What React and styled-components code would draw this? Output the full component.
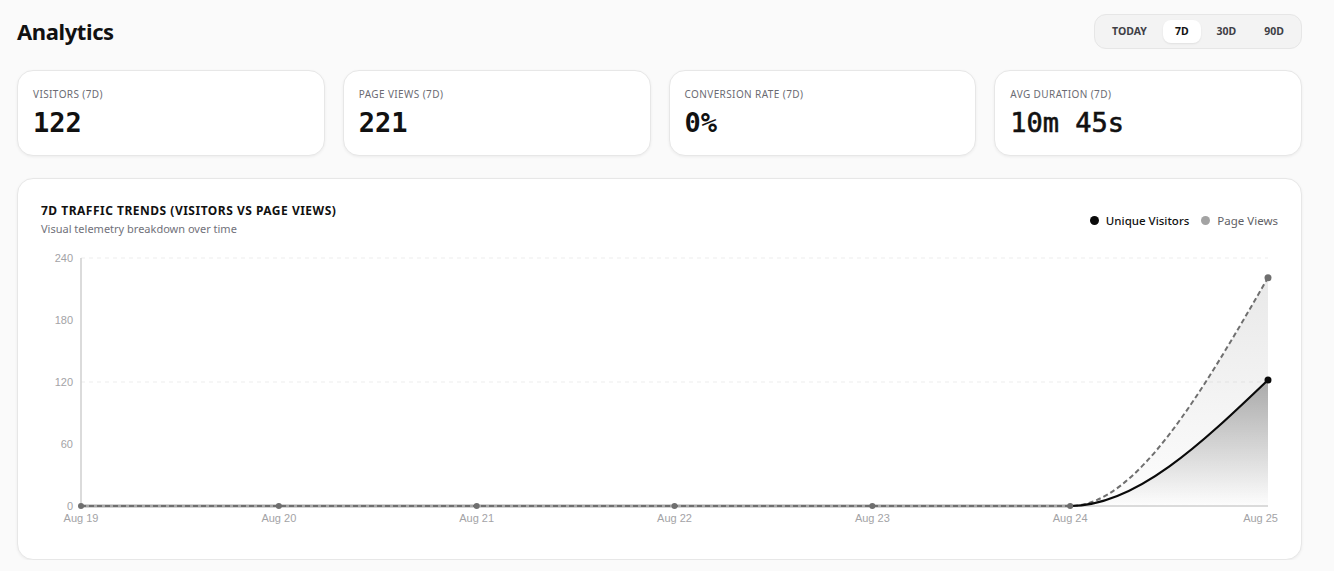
import React from "react";
import styled, { createGlobalStyle } from "styled-components";

const GlobalStyle = createGlobalStyle`
  html, body {
    margin: 0;
    padding: 0;
    background: #fafafa;
    font-family: "Noto Sans", "Open Sans", sans-serif;
    color: #111;
  }
`;

const stats = [
  { label: "Visitors (7D)", value: "122" },
  { label: "Page Views (7D)", value: "221" },
  { label: "Conversion Rate (7D)", value: "0%" },
  { label: "Avg Duration (7D)", value: "10m 45s", medium: true },
];

const days = ["Aug 19", "Aug 20", "Aug 21", "Aug 22", "Aug 23", "Aug 24", "Aug 25"];
const visitors = [0, 0, 0, 0, 0, 0, 122];
const pageViews = [0, 0, 0, 0, 0, 0, 221];

// chart geometry (svg local coords)
const W = 1237;
const H = 287;
const X0 = 40;
const X1 = 1227;
const Y0 = 258;
const Y1 = 10;
const MAX = 240;

const px = (i) => X0 + (i * (X1 - X0)) / (days.length - 1);
const py = (v) => Y0 - (v * (Y0 - Y1)) / MAX;

const sign = (x) => (x < 0 ? -1 : 1);

// monotone-x cubic segments, same idea as d3's curveMonotoneX
const segments = (pts) => {
  const n = pts.length;
  const s = [];
  for (let i = 0; i < n - 1; i++) {
    s.push((pts[i + 1][1] - pts[i][1]) / (pts[i + 1][0] - pts[i][0]));
  }
  const t = new Array(n).fill(0);
  for (let i = 1; i < n - 1; i++) {
    const h0 = pts[i][0] - pts[i - 1][0];
    const h1 = pts[i + 1][0] - pts[i][0];
    const p = (s[i - 1] * h1 + s[i] * h0) / (h0 + h1);
    t[i] =
      (sign(s[i - 1]) + sign(s[i])) *
        Math.min(Math.abs(s[i - 1]), Math.abs(s[i]), 0.5 * Math.abs(p)) || 0;
  }
  t[0] = (3 * s[0] - t[1]) / 2;
  t[n - 1] = (3 * s[n - 2] - t[n - 2]) / 2;
  const out = [];
  for (let i = 0; i < n - 1; i++) {
    const dx = (pts[i + 1][0] - pts[i][0]) / 3;
    out.push(
      `C${pts[i][0] + dx},${pts[i][1] + dx * t[i]} ${pts[i + 1][0] - dx},${
        pts[i + 1][1] - dx * t[i + 1]
      } ${pts[i + 1][0]},${pts[i + 1][1]}`
    );
  }
  return out;
};

const toPts = (arr) => arr.map((v, i) => [px(i), py(v)]);
const line = (arr, from = 0) => {
  const pts = toPts(arr);
  return `M${pts[from][0]},${pts[from][1]}` + segments(pts).slice(from).join("");
};
const area = (arr) => `${line(arr)}L${px(arr.length - 1)},${Y0}L${px(0)},${Y0}Z`;

const Page = styled.div`
  padding: 14px 32px 0 17px;
`;

const Header = styled.div`
  display: flex;
  align-items: center;
  justify-content: space-between;
  height: 34px;
`;

const Title = styled.h1`
  margin: 0;
  font-size: 22px;
  font-weight: 700;
  letter-spacing: -0.4px;
  color: #111;
`;

const Tabs = styled.div`
  display: flex;
  gap: 4px;
  padding: 5px;
  background: #f3f3f3;
  border: 1px solid #e6e6e6;
  border-radius: 12px;
`;

const Tab = styled.button`
  border: none;
  font-family: "Noto Sans", sans-serif;
  font-size: 10.5px;
  font-weight: 700;
  line-height: 13px;
  padding: 5px 12px;
  border-radius: 8px;
  cursor: pointer;
  color: ${(p) => (p.active ? "#111" : "#3f3f46")};
  background: ${(p) => (p.active ? "#fff" : "transparent")};
  box-shadow: ${(p) => (p.active ? "0 1px 2px rgba(0,0,0,0.08)" : "none")};
`;

const StatGrid = styled.div`
  display: grid;
  grid-template-columns: repeat(4, 1fr);
  gap: 18px;
  margin-top: 22px;
`;

const Card = styled.div`
  background: #fff;
  border: 1px solid #e7e7e7;
  border-radius: 16px;
  box-shadow: 0 1px 3px rgba(0, 0, 0, 0.06);
`;

const StatCard = styled(Card)`
  padding: 16px 15px 15px;
  box-sizing: border-box;
  height: 86px;
`;

const StatLabel = styled.div`
  font-size: 10px;
  line-height: 14px;
  text-transform: uppercase;
  letter-spacing: 0.4px;
  color: #6b6b73;
`;

const StatValue = styled.div`
  margin-top: 6px;
  font-family: "DejaVu Sans Mono", "Liberation Mono", monospace;
  font-size: 27px;
  line-height: 32px;
  font-weight: ${(p) => (p.medium ? 400 : 700)};
  -webkit-text-stroke: ${(p) => (p.medium ? "0.6px #111" : "0")};
  color: #111;
`;

const ChartCard = styled(Card)`
  margin-top: 22px;
  padding: 24px 23px;
`;

const ChartHeader = styled.div`
  display: flex;
  align-items: center;
  justify-content: space-between;
  height: 34px;
`;

const ChartTitle = styled.div`
  font-size: 12px;
  line-height: 16px;
  font-weight: 700;
  letter-spacing: 0.5px;
  text-transform: uppercase;
  color: #111;
`;

const ChartSub = styled.div`
  margin-top: 2px;
  font-size: 11px;
  line-height: 16px;
  color: #71717a;
`;

const Legend = styled.div`
  display: flex;
  gap: 12px;
  align-items: center;
`;

const LegendItem = styled.div`
  display: flex;
  align-items: center;
  gap: 7px;
  font-size: 11.5px;
  font-weight: ${(p) => (p.muted ? 400 : 500)};
  color: ${(p) => (p.muted ? "#5f5f66" : "#111")};
`;

const Dot = styled.span`
  width: 9px;
  height: 9px;
  border-radius: 50%;
  background: ${(p) => p.color};
`;

const ChartSvg = styled.svg`
  display: block;
  margin-top: 11px;
  font-family: "Liberation Sans", Arial, sans-serif;
  font-size: 11px;
`;

const TrafficChart = () => {
  const last = days.length - 1;
  return (
    <ChartSvg width={W} height={H} viewBox={`0 0 ${W} ${H}`}>
      <defs>
        <linearGradient id="pvFill" x1="0" y1="0" x2="0" y2="1">
          <stop offset="0%" stopColor="#999" stopOpacity="0.22" />
          <stop offset="100%" stopColor="#999" stopOpacity="0.02" />
        </linearGradient>
        <linearGradient id="uvFill" x1="0" y1="0" x2="0" y2="1">
          <stop offset="0%" stopColor="#000" stopOpacity="0.3" />
          <stop offset="100%" stopColor="#000" stopOpacity="0" />
        </linearGradient>
      </defs>

      {[240, 120].map((v) => (
        <line key={v} x1={X0} x2={X1} y1={py(v)} y2={py(v)} stroke="#ededed" strokeDasharray="4 4" />
      ))}

      {[0, 60, 120, 180, 240].map((v) => (
        <text key={v} x={32} y={py(v) + 4} textAnchor="end" fill="#a3a3a6">
          {v}
        </text>
      ))}

      {days.map((d, i) => (
        <text
          key={d}
          x={i === last ? W : px(i)}
          y={274}
          textAnchor={i === last ? "end" : "middle"}
          fill="#a3a3a6"
        >
          {d}
        </text>
      ))}

      <path d={area(pageViews)} fill="url(#pvFill)" />
      <path d={area(visitors)} fill="url(#uvFill)" />

      <line x1={X0} x2={X0} y1={Y1} y2={Y0} stroke="#cfcfcf" strokeWidth="1.5" />
      <line x1={X0} x2={X1} y1={Y0} y2={Y0} stroke="#cfcfcf" strokeWidth="1.5" />
      <line x1={X0} x2={px(last - 1)} y1={Y0} y2={Y0} stroke="#a8a8a8" strokeWidth="3" />

      <path d={line(pageViews)} fill="none" stroke="#6f6f6f" strokeWidth="2" strokeDasharray="5 3" />
      <path d={line(visitors, last - 1)} fill="none" stroke="#0a0a0a" strokeWidth="2.2" />

      {pageViews.map((v, i) => (
        <circle key={i} cx={px(i)} cy={py(v)} r={i === last ? 3.5 : 3} fill="#6f6f6f" />
      ))}
      <circle cx={px(last)} cy={py(visitors[last])} r="3.5" fill="#0a0a0a" />
    </ChartSvg>
  );
};

const App = () => (
  <Page>
    <GlobalStyle />
    <Header>
      <Title>Analytics</Title>
      <Tabs>
        <Tab>TODAY</Tab>
        <Tab active>7D</Tab>
        <Tab>30D</Tab>
        <Tab>90D</Tab>
      </Tabs>
    </Header>

    <StatGrid>
      {stats.map((s) => (
        <StatCard key={s.label}>
          <StatLabel>{s.label}</StatLabel>
          <StatValue medium={s.medium}>{s.value}</StatValue>
        </StatCard>
      ))}
    </StatGrid>

    <ChartCard>
      <ChartHeader>
        <div>
          <ChartTitle>7D Traffic Trends (Visitors vs Page Views)</ChartTitle>
          <ChartSub>Visual telemetry breakdown over time</ChartSub>
        </div>
        <Legend>
          <LegendItem>
            <Dot color="#0a0a0a" />
            Unique Visitors
          </LegendItem>
          <LegendItem muted>
            <Dot color="#a3a3a3" />
            Page Views
          </LegendItem>
        </Legend>
      </ChartHeader>
      <TrafficChart />
    </ChartCard>
  </Page>
);

export default App;
